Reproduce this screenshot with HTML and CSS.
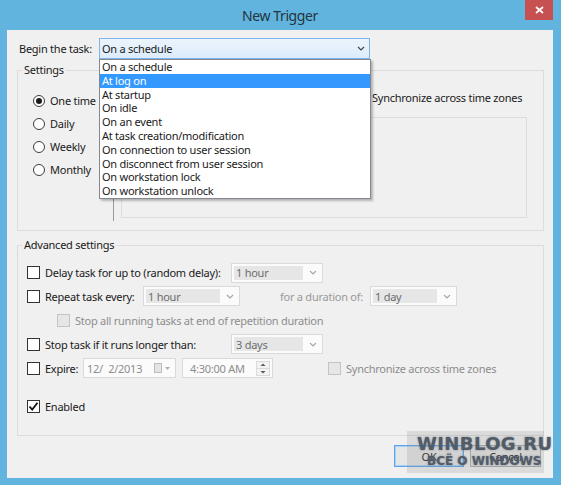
FILE: index.html
```html
<!DOCTYPE html>
<html lang="en">
<head>
  <meta charset="UTF-8" />
  <meta name="viewport" content="width=device-width, initial-scale=1.0"/>
  <title>New Trigger</title>
  <link rel="stylesheet" href="styles.css">
</head>
<body>

<div class="window">
  <div class="titlebar">
    <span></span>
    <span class="title">New Trigger</span>
    <button class="close" aria-label="Close">
      <svg width="9" height="8" viewBox="0 0 9 8"><path d="M1 1 L8 7 M8 1 L1 7" stroke="#fff" stroke-width="1.7" fill="none"/></svg>
    </button>
  </div>

  <div class="client">
    <div class="begin-row">
      <span class="begin-label">Begin the task:</span>
      <div class="combo open">
        <span class="combo-text">On a schedule</span>
        <svg class="chev" width="8" height="5" viewBox="0 0 8 5"><path d="M1 1 L4 4 L7 1" stroke="#444" stroke-width="1.2" fill="none"/></svg>
      </div>
    </div>

    <fieldset class="group settings">
      <legend>Settings</legend>
      <div class="settings-body">
        <div class="radios">
          <label class="radio checked"><span class="dot"></span>One time</label>
          <label class="radio"><span class="dot"></span>Daily</label>
          <label class="radio"><span class="dot"></span>Weekly</label>
          <label class="radio"><span class="dot"></span>Monthly</label>
        </div>
        <div class="divider"></div>
        <div class="pane">
          <!-- start date and time sit under the open list -->
          <div class="start-row">
            <div class="field start-date"></div>
            <div class="field start-time"></div>
            <label class="check sync-top"><span class="box"></span>Synchronize across time zones</label>
          </div>
          <div class="inner-box"></div>
        </div>
      </div>
    </fieldset>

    <fieldset class="group advanced">
      <legend>Advanced settings</legend>
      <div class="adv-body">
        <div class="row first">
          <label class="check long"><span class="box"></span>Delay task for up to (random delay):</label>
          <div class="combo off w-delay">
            <span class="val">1 hour</span>
            <svg class="chev" width="8" height="5" viewBox="0 0 8 5"><path d="M1 1 L4 4 L7 1" stroke="#a6a6a6" stroke-width="1.2" fill="none"/></svg>
          </div>
        </div>
        <div class="row">
          <label class="check mid"><span class="box"></span>Repeat task every:</label>
          <div class="combo off w-repeat">
            <span class="val">1 hour</span>
            <svg class="chev" width="8" height="5" viewBox="0 0 8 5"><path d="M1 1 L4 4 L7 1" stroke="#a6a6a6" stroke-width="1.2" fill="none"/></svg>
          </div>
          <span class="muted duration-label">for a duration of:</span>
          <div class="combo off w-duration">
            <span class="val">1 day</span>
            <svg class="chev" width="8" height="5" viewBox="0 0 8 5"><path d="M1 1 L4 4 L7 1" stroke="#a6a6a6" stroke-width="1.2" fill="none"/></svg>
          </div>
        </div>
        <div class="row">
          <label class="check disabled indent"><span class="box"></span>Stop all running tasks at end of repetition duration</label>
        </div>
        <div class="row">
          <label class="check long"><span class="box"></span>Stop task if it runs longer than:</label>
          <div class="combo off w-delay">
            <span class="val">3 days</span>
            <svg class="chev" width="8" height="5" viewBox="0 0 8 5"><path d="M1 1 L4 4 L7 1" stroke="#a6a6a6" stroke-width="1.2" fill="none"/></svg>
          </div>
        </div>
        <div class="row">
          <label class="check short"><span class="box"></span>Expire:</label>
          <div class="field date">
            <span class="fval">12/&nbsp; 2/2013</span>
            <svg class="cal" width="18" height="10" viewBox="0 0 18 10">
              <rect x="0.5" y="0.5" width="7" height="9" fill="#e4e4e4" stroke="#bdbdbd"/>
              <path d="M11 4 L16 4 L13.5 7 Z" fill="#b0b0b0"/>
            </svg>
          </div>
          <div class="field time">
            <span class="fval">4:30:00 AM</span>
            <svg class="spin" width="14" height="15" viewBox="0 0 14 15">
              <rect x="0.5" y="0.5" width="13" height="14" fill="#f3f3f3" stroke="#dadada"/>
              <line x1="1" y1="7.5" x2="13" y2="7.5" stroke="#dadada"/>
              <path d="M4.5 5 L9.5 5 L7 2.5 Z" fill="#5a5a5a"/>
              <path d="M4.5 10 L9.5 10 L7 12.5 Z" fill="#5a5a5a"/>
            </svg>
          </div>
          <label class="check disabled sync"><span class="box"></span>Synchronize across time zones</label>
        </div>
        <div class="row enabled-row">
          <label class="check"><span class="box on">
            <svg width="11" height="11" viewBox="0 0 11 11"><path d="M1.5 5.5 L4.2 8.5 L9.5 1.8" stroke="#111" stroke-width="1.8" fill="none"/></svg>
          </span>Enabled</label>
        </div>
      </div>
    </fieldset>

    <div class="buttons">
      <button class="btn default">OK</button>
      <button class="btn">Cancel</button>
    </div>

    <!-- open list of the "Begin the task" combo -->
    <ul class="dropdown">
      <li>On a schedule</li>
      <li class="sel">At log on</li>
      <li>At startup</li>
      <li>On idle</li>
      <li>On an event</li>
      <li>At task creation/modification</li>
      <li>On connection to user session</li>
      <li>On disconnect from user session</li>
      <li>On workstation lock</li>
      <li>On workstation unlock</li>
    </ul>

    <div class="watermark">
      <div class="wm-big">WINBLOG.RU</div>
      <div class="wm-small">ВСЁ О WINDOWS</div>
    </div>
  </div>
</div>

</body>
</html>
```

FILE: styles.css
```css
body {
  margin: 0;
  background: #60b4de;
  font-family: 'Noto Sans', sans-serif;
  font-size: 11px;
  letter-spacing: -0.25px;
  color: #1a1a1a;
}

.window {
  width: 561px;
  height: 485px;
  box-sizing: border-box;
  padding: 0 8px 7px 7px;
}

/* title bar */

.titlebar {
  height: 30px;
  display: grid;
  grid-template-columns: 1fr auto 1fr;
}

.title {
  font-size: 14px;
  letter-spacing: -0.4px;
  line-height: 31px;
  color: #263440;
}

.close {
  justify-self: end;
  width: 28px;
  height: 20px;
  border: none;
  padding: 0;
  background: #c75050;
  display: flex;
  align-items: center;
  justify-content: center;
}

/* client area */

.client {
  position: relative;
  height: 448px;
  box-sizing: border-box;
  padding: 8px 9px 0 10px;
  background: #f0f0f0;
}

.begin-row {
  display: flex;
  align-items: center;
  height: 21px;
}

.begin-label {
  width: 80px;
  padding-left: 2px;
  white-space: nowrap;
}

.combo {
  display: flex;
  align-items: center;
  box-sizing: border-box;
  white-space: nowrap;
}

.combo .chev {
  flex: none;
}

.combo.open {
  width: 271px;
  height: 21px;
  padding: 0 4px 0 2px;
  border: 1px solid #7eb4ea;
  background: linear-gradient(#ecf4fc, #dcecfc);
}

.combo-text {
  flex: 1;
}

.combo.off {
  height: 20px;
  padding: 2px 5px 2px 2px;
  border: 1px solid #dadada;
  background: #fbfbfb;
  color: #6d6d6d;
}

.combo.off .val {
  flex: 1;
  align-self: stretch;
  display: flex;
  align-items: center;
  padding-left: 2px;
  margin-right: 6px;
  background: #e6e6e6;
}

.w-delay { width: 92px; }
.w-repeat { width: 97px; }
.w-duration { width: 87px; }

/* group boxes */

.group {
  margin: 0;
  padding: 0;
  width: 527px;
  box-sizing: border-box;
  border: 1px solid #dcdcdc;
}

.group legend {
  margin-left: 4px;
  padding: 0 2px;
  line-height: 16px;
}

.settings {
  margin-top: 3px;
  height: 169px;
}

.settings-body {
  display: flex;
  height: 152px;
}

.radios {
  width: 95px;
  box-sizing: border-box;
  padding: 11px 0 0 15px;
}

.radio {
  display: flex;
  align-items: center;
  gap: 5px;
  height: 23px;
  white-space: nowrap;
}

.radio .dot {
  width: 12px;
  height: 12px;
  box-sizing: border-box;
  border: 1px solid #3c3c3c;
  border-radius: 50%;
  background: #fff;
  display: flex;
  align-items: center;
  justify-content: center;
}

.radio.checked .dot::after {
  content: '';
  width: 6px;
  height: 6px;
  border-radius: 50%;
  background: #1a1a1a;
}

.divider {
  width: 1px;
  margin: 20px 0 9px;
  background: #9a9a9a;
}

.pane {
  flex: 1;
  padding: 9px 0 0 7px;
}

.start-row {
  display: flex;
  align-items: center;
  height: 20px;
}

.field {
  height: 20px;
  box-sizing: border-box;
  display: flex;
  align-items: center;
  border: 1px solid #d9d9d9;
  background: #fbfbfb;
  color: #8d8d8d;
  white-space: nowrap;
}

.start-date {
  width: 100px;
  margin-left: 40px;
}

.start-time {
  width: 76px;
  margin-left: 6px;
}

.sync-top {
  margin-left: 11px;
}

.inner-box {
  width: 406px;
  height: 101px;
  margin-top: 10px;
  box-sizing: border-box;
  border: 1px solid #dcdcdc;
}

/* checkboxes */

.check {
  display: flex;
  align-items: center;
  gap: 5px;
  white-space: nowrap;
}

.check .box {
  width: 13px;
  height: 13px;
  flex: none;
  box-sizing: border-box;
  border: 1px solid #333;
  background: #fff;
  display: flex;
  align-items: center;
  justify-content: center;
}

.check.disabled {
  color: #8d8d8d;
}

.check.disabled .box {
  border-color: #c4c4c4;
  background: #e6e6e6;
}

.check.long { width: 204px; }
.check.mid { width: 116px; }
.check.short { width: 56px; }
.check.indent { margin-left: 30px; }
.check.sync { margin-left: 55px; }

/* advanced settings */

.advanced {
  margin-top: 6px;
  height: 199px;
}

.adv-body {
  padding: 8px 0 0 9px;
}

.row {
  display: flex;
  align-items: center;
  height: 24px;
}

.row.first {
  height: 23px;
}

.row.enabled-row {
  margin-top: 14px;
}

.muted {
  color: #999;
}

.duration-label {
  width: 90px;
  margin-left: 40px;
  white-space: nowrap;
}

.field.date {
  width: 93px;
  padding-left: 3px;
}

.field.date .fval {
  width: 67px;
}

.field.time {
  width: 91px;
  margin-left: 6px;
  padding-left: 7px;
}

.field.time .spin {
  margin-left: auto;
  margin-right: 2px;
}

/* dialog buttons */

.buttons {
  display: flex;
  justify-content: flex-end;
  gap: 6px;
  margin: 9px 3px 0 0;
}

.btn {
  width: 71px;
  height: 22px;
  padding: 0;
  border: 1px solid #acacac;
  background: #e6e6e6;
  font: inherit;
  letter-spacing: inherit;
  color: #1a1a1a;
}

.btn.default {
  width: 70px;
  border-color: #5ea4e8;
  box-shadow: inset 0 0 0 1px #a9d1f7;
}

/* open list */

.dropdown {
  position: absolute;
  left: 92px;
  top: 29px;
  width: 272px;
  margin: 0;
  padding: 0;
  list-style: none;
  box-sizing: border-box;
  background: #fff;
  border: 1px solid #828790;
  box-shadow: 2px 2px 2px rgba(0, 0, 0, 0.25);
}

.dropdown li {
  height: 13.8px;
  line-height: 13.8px;
  padding-left: 2px;
  white-space: nowrap;
}

.dropdown li.sel {
  background: #3399ff;
  color: #fff;
}

/* site watermark over the corner */

.watermark {
  position: absolute;
  left: 400px;
  top: 401px;
  width: 137px;
  height: 42px;
  background: rgba(140, 140, 140, 0.22);
  font-family: 'DejaVu Sans', sans-serif;
  font-weight: bold;
  letter-spacing: 0;
  white-space: nowrap;
  color: #525c69;
  text-shadow: 0 0 2px rgba(60, 70, 80, 0.6);
}

.wm-big {
  font-size: 18px;
  letter-spacing: 0.4px;
  line-height: 20px;
  margin-top: 3px;
  padding-left: 10px;
}

.wm-small {
  font-size: 12px;
  line-height: 14px;
  padding-left: 20px;
}
```
